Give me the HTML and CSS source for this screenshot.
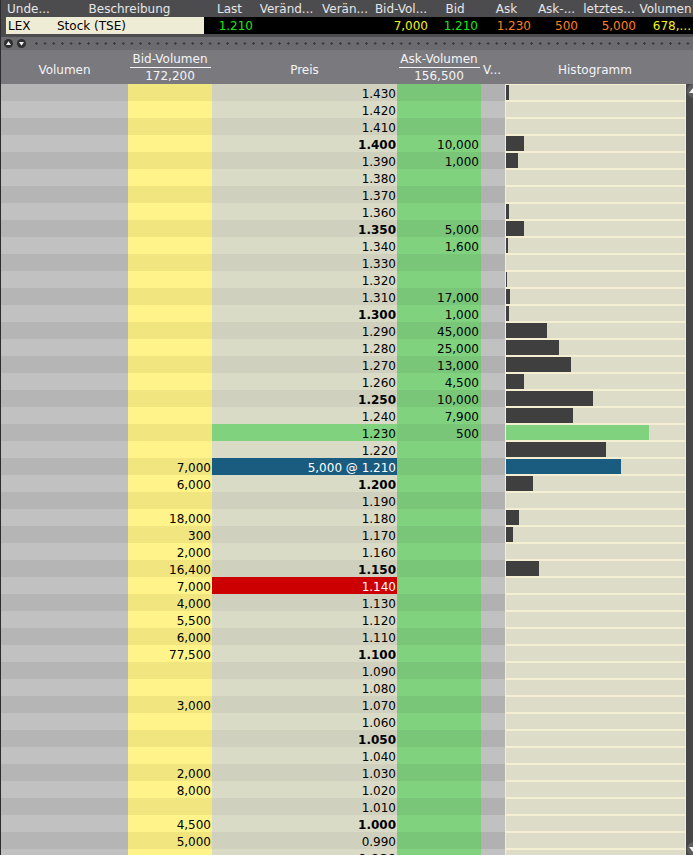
FILE: index.html
```html
<!DOCTYPE html>
<html>
  <head>
    <meta charset="utf-8">
    <title>LEX - BookTrader</title>
    <link rel="stylesheet" href="styles.css">
  </head>
  <body>
    <div class="app">
      <!-- quote line for the selected contract -->
      <div class="quote">
        <span class="qh left">Unde...</span>
        <span class="qh">Beschreibung</span>
        <span class="qh">Last</span>
        <span class="qh">Veränd...</span>
        <span class="qh">Verän...</span>
        <span class="qh">Bid-Vol...</span>
        <span class="qh">Bid</span>
        <span class="qh">Ask</span>
        <span class="qh">Ask-...</span>
        <span class="qh">letztes...</span>
        <span class="qh">Volumen</span>

        <span class="qd desc">LEX</span>
        <span class="qd desc">Stock (TSE)</span>
        <span class="qd green">1.210</span>
        <span class="qd"></span>
        <span class="qd"></span>
        <span class="qd yellow">7,000</span>
        <span class="qd green">1.210</span>
        <span class="qd orange">1.230</span>
        <span class="qd orange">500</span>
        <span class="qd orange">5,000</span>
        <span class="qd yellow">678,...</span>
      </div>

      <div class="toolbar">
        <svg class="knob" width="9" height="9" viewBox="0 0 9 9"><circle cx="4.5" cy="4.5" r="4.5" fill="#2f2f31"/><polygon points="4.5,2.2 7,6 2,6" fill="#f2f2f2"/></svg>
        <svg class="knob" width="9" height="9" viewBox="0 0 9 9"><circle cx="4.5" cy="4.5" r="4.5" fill="#2f2f31"/><polygon points="2,3 7,3 4.5,6.8" fill="#f2f2f2"/></svg>
        <span class="dots"></span>
      </div>

      <div class="head">
        <span class="hc">Volumen</span>
        <span class="hc two"><b>Bid-Volumen</b><em>172,200</em></span>
        <span class="hc">Preis</span>
        <span class="hc two"><b>Ask-Volumen</b><em>156,500</em></span>
        <span class="hc left">V...</span>
        <span class="hc">Histogramm</span>
      </div>

      <div class="ladder">
        <div class="rows">
          <div class="r"><span class="vol"></span><span class="bid"></span><span class="px">1.430</span><span class="ask"></span><span class="v"></span><span class="hist"><i style="width:3px"></i></span></div>
          <div class="r"><span class="vol"></span><span class="bid"></span><span class="px">1.420</span><span class="ask"></span><span class="v"></span><span class="hist"></span></div>
          <div class="r"><span class="vol"></span><span class="bid"></span><span class="px">1.410</span><span class="ask"></span><span class="v"></span><span class="hist"></span></div>
          <div class="r"><span class="vol"></span><span class="bid"></span><span class="px b">1.400</span><span class="ask">10,000</span><span class="v"></span><span class="hist"><i style="width:18px"></i></span></div>
          <div class="r"><span class="vol"></span><span class="bid"></span><span class="px">1.390</span><span class="ask">1,000</span><span class="v"></span><span class="hist"><i style="width:12px"></i></span></div>
          <div class="r"><span class="vol"></span><span class="bid"></span><span class="px">1.380</span><span class="ask"></span><span class="v"></span><span class="hist"></span></div>
          <div class="r"><span class="vol"></span><span class="bid"></span><span class="px">1.370</span><span class="ask"></span><span class="v"></span><span class="hist"></span></div>
          <div class="r"><span class="vol"></span><span class="bid"></span><span class="px">1.360</span><span class="ask"></span><span class="v"></span><span class="hist"><i style="width:3px"></i></span></div>
          <div class="r"><span class="vol"></span><span class="bid"></span><span class="px b">1.350</span><span class="ask">5,000</span><span class="v"></span><span class="hist"><i style="width:18px"></i></span></div>
          <div class="r"><span class="vol"></span><span class="bid"></span><span class="px">1.340</span><span class="ask">1,600</span><span class="v"></span><span class="hist"><i style="width:2px"></i></span></div>
          <div class="r"><span class="vol"></span><span class="bid"></span><span class="px">1.330</span><span class="ask"></span><span class="v"></span><span class="hist"></span></div>
          <div class="r"><span class="vol"></span><span class="bid"></span><span class="px">1.320</span><span class="ask"></span><span class="v"></span><span class="hist"><i style="width:1px"></i></span></div>
          <div class="r"><span class="vol"></span><span class="bid"></span><span class="px">1.310</span><span class="ask">17,000</span><span class="v"></span><span class="hist"><i style="width:4px"></i></span></div>
          <div class="r"><span class="vol"></span><span class="bid"></span><span class="px b">1.300</span><span class="ask">1,000</span><span class="v"></span><span class="hist"><i style="width:3px"></i></span></div>
          <div class="r"><span class="vol"></span><span class="bid"></span><span class="px">1.290</span><span class="ask">45,000</span><span class="v"></span><span class="hist"><i style="width:41px"></i></span></div>
          <div class="r"><span class="vol"></span><span class="bid"></span><span class="px">1.280</span><span class="ask">25,000</span><span class="v"></span><span class="hist"><i style="width:53px"></i></span></div>
          <div class="r"><span class="vol"></span><span class="bid"></span><span class="px">1.270</span><span class="ask">13,000</span><span class="v"></span><span class="hist"><i style="width:65px"></i></span></div>
          <div class="r"><span class="vol"></span><span class="bid"></span><span class="px">1.260</span><span class="ask">4,500</span><span class="v"></span><span class="hist"><i style="width:18px"></i></span></div>
          <div class="r"><span class="vol"></span><span class="bid"></span><span class="px b">1.250</span><span class="ask">10,000</span><span class="v"></span><span class="hist"><i style="width:87px"></i></span></div>
          <div class="r"><span class="vol"></span><span class="bid"></span><span class="px">1.240</span><span class="ask">7,900</span><span class="v"></span><span class="hist"><i style="width:67px"></i></span></div>
          <div class="r"><span class="vol"></span><span class="bid"></span><span class="px ask-hit">1.230</span><span class="ask">500</span><span class="v"></span><span class="hist"><i class="green" style="width:143px"></i></span></div>
          <div class="r"><span class="vol"></span><span class="bid"></span><span class="px">1.220</span><span class="ask"></span><span class="v"></span><span class="hist"><i style="width:100px"></i></span></div>
          <div class="r"><span class="vol"></span><span class="bid">7,000</span><span class="px pos">5,000 @ 1.210</span><span class="ask"></span><span class="v"></span><span class="hist"><i class="blue" style="width:115px"></i></span></div>
          <div class="r"><span class="vol"></span><span class="bid">6,000</span><span class="px b">1.200</span><span class="ask"></span><span class="v"></span><span class="hist"><i style="width:27px"></i></span></div>
          <div class="r"><span class="vol"></span><span class="bid"></span><span class="px">1.190</span><span class="ask"></span><span class="v"></span><span class="hist"></span></div>
          <div class="r"><span class="vol"></span><span class="bid">18,000</span><span class="px">1.180</span><span class="ask"></span><span class="v"></span><span class="hist"><i style="width:13px"></i></span></div>
          <div class="r"><span class="vol"></span><span class="bid">300</span><span class="px">1.170</span><span class="ask"></span><span class="v"></span><span class="hist"><i style="width:7px"></i></span></div>
          <div class="r"><span class="vol"></span><span class="bid">2,000</span><span class="px">1.160</span><span class="ask"></span><span class="v"></span><span class="hist"></span></div>
          <div class="r"><span class="vol"></span><span class="bid">16,400</span><span class="px b">1.150</span><span class="ask"></span><span class="v"></span><span class="hist"><i style="width:33px"></i></span></div>
          <div class="r"><span class="vol"></span><span class="bid">7,000</span><span class="px alert">1.140</span><span class="ask"></span><span class="v"></span><span class="hist"></span></div>
          <div class="r"><span class="vol"></span><span class="bid">4,000</span><span class="px">1.130</span><span class="ask"></span><span class="v"></span><span class="hist"></span></div>
          <div class="r"><span class="vol"></span><span class="bid">5,500</span><span class="px">1.120</span><span class="ask"></span><span class="v"></span><span class="hist"></span></div>
          <div class="r"><span class="vol"></span><span class="bid">6,000</span><span class="px">1.110</span><span class="ask"></span><span class="v"></span><span class="hist"></span></div>
          <div class="r"><span class="vol"></span><span class="bid">77,500</span><span class="px b">1.100</span><span class="ask"></span><span class="v"></span><span class="hist"></span></div>
          <div class="r"><span class="vol"></span><span class="bid"></span><span class="px">1.090</span><span class="ask"></span><span class="v"></span><span class="hist"></span></div>
          <div class="r"><span class="vol"></span><span class="bid"></span><span class="px">1.080</span><span class="ask"></span><span class="v"></span><span class="hist"></span></div>
          <div class="r"><span class="vol"></span><span class="bid">3,000</span><span class="px">1.070</span><span class="ask"></span><span class="v"></span><span class="hist"></span></div>
          <div class="r"><span class="vol"></span><span class="bid"></span><span class="px">1.060</span><span class="ask"></span><span class="v"></span><span class="hist"></span></div>
          <div class="r"><span class="vol"></span><span class="bid"></span><span class="px b">1.050</span><span class="ask"></span><span class="v"></span><span class="hist"></span></div>
          <div class="r"><span class="vol"></span><span class="bid"></span><span class="px">1.040</span><span class="ask"></span><span class="v"></span><span class="hist"></span></div>
          <div class="r"><span class="vol"></span><span class="bid">2,000</span><span class="px">1.030</span><span class="ask"></span><span class="v"></span><span class="hist"></span></div>
          <div class="r"><span class="vol"></span><span class="bid">8,000</span><span class="px">1.020</span><span class="ask"></span><span class="v"></span><span class="hist"></span></div>
          <div class="r"><span class="vol"></span><span class="bid"></span><span class="px">1.010</span><span class="ask"></span><span class="v"></span><span class="hist"></span></div>
          <div class="r"><span class="vol"></span><span class="bid">4,500</span><span class="px b">1.000</span><span class="ask"></span><span class="v"></span><span class="hist"></span></div>
          <div class="r"><span class="vol"></span><span class="bid">5,000</span><span class="px">0.990</span><span class="ask"></span><span class="v"></span><span class="hist"></span></div>
          <div class="r"><span class="vol"></span><span class="bid"></span><span class="px b">0.980</span><span class="ask"></span><span class="v"></span><span class="hist"></span></div>
        </div>
        <div class="scroll">
          <span class="arrow top"></span>
          <span class="arrow bottom"></span>
        </div>
      </div>
    </div>
  </body>
</html>
```

FILE: styles.css
```css
html, body
{
  margin: 0;
  height: 855px;
  overflow: hidden;
  background: #4c4c4e;
}

.app
{
  font-family: "DejaVu Sans", Verdana, sans-serif;
  font-size: 12px;
  border-left: 1px solid #2c2c2e;
  height: 855px;
  overflow: hidden;
}

/* quote line */
.quote
{
  display: grid;
  grid-template-columns: 49px 149px 51px 63px 54px 58px 50px 53px 47px 58px 55px;
  grid-template-rows: 17px 17px;
  padding-left: 5px;
  background: #4c4c4e;
  line-height: 17px;
}

.qh
{
  color: #e6e6e8;
  text-align: center;
  white-space: nowrap;
  overflow: hidden;
  padding-top: 2px;
  line-height: 15px;
}

.qh.left
{
  text-align: left;
  padding-left: 1px;
}

.qd
{
  background: #000;
  text-align: right;
  padding-right: 2px;
  white-space: nowrap;
  overflow: hidden;
  padding-top: 1px;
  line-height: 16px;
}

.qd.desc
{
  background: #efecd6;
  color: #000;
  text-align: left;
  padding-left: 2px;
}

.green { color: #19e619; }
.yellow { color: #f2f21a; }
.orange { color: #ff7f1e; }

/* splitter */
.toolbar
{
  display: flex;
  align-items: center;
  gap: 4px;
  height: 13px;
  border-top: 3px solid #4c4c4e;
  background: #6c6c70;
  padding-left: 3px;
}

.dots
{
  flex: 1;
  height: 3px;
  margin-left: 2px;
  background-image: radial-gradient(circle, #3a3a3c 1px, transparent 1.3px);
  background-size: 8.7px 3px;
}

/* column titles */
.head
{
  display: grid;
  grid-template-columns: 127px 84px 185px 84px 24px 180px 8px;
  height: 34px;
  background: #7a7a7e;
  color: #f4f4f8;
  line-height: 17px;
}

.hc
{
  text-align: center;
  padding-top: 12px;
  white-space: nowrap;
}

.hc.left
{
  text-align: left;
  padding-left: 2px;
}

.hc.two
{
  padding-top: 2px;
  display: flex;
  flex-direction: column;
  align-items: center;
}

.hc.two b
{
  font-weight: normal;
  width: 81px;
  line-height: 15px;
  border-bottom: 1px solid #f4f4f8;
}

.hc.two em
{
  font-style: normal;
  line-height: 16px;
}

/* price ladder */
.ladder
{
  display: flex;
}

.rows
{
  width: 684px;
}

.r
{
  display: grid;
  grid-template-columns: 127px 84px 185px 84px 24px 180px;
  height: 17px;
  color: #000;
}

.r span
{
  text-align: right;
  padding-right: 1px;
  padding-top: 3px;
  line-height: 14px;
  white-space: nowrap;
}

.vol { background: #c1c1c1; }
.bid { background: #fff389; }
.px { background: #dadbc7; }
.r .ask { background: #80d27f; padding-right: 2px; }
.v { background: #c1c1c1; }

.r:nth-child(odd) .vol { background: #b5b5b5; }
.r:nth-child(odd) .bid { background: #f1e57f; }
.r:nth-child(odd) .px { background: #d0d0bf; }
.r:nth-child(odd) .ask { background: #79c679; }
.r:nth-child(odd) .v { background: #b1b1b1; }

.r .px.b { font-weight: bold; }
.r .px.ask-hit { background: #80d27f; }
.r .px.pos { background: #1a5b80; color: #fff; }
.r .px.alert { background: #cc0000; color: #fff; }

.r .hist
{
  box-sizing: border-box;
  background: #dcdcc8;
  border: 1px solid #f4eed2;
  border-right: 0;
  padding: 0;
}

.hist i
{
  display: block;
  height: 15px;
  background: #3f3f3f;
}

.hist i.green { background: #80d27f; }
.hist i.blue { background: #1a5b80; }

.scroll
{
  position: relative;
  width: 8px;
  height: 771px;
  background: #474749;
  border-left: 1px solid #f4eed2;
  overflow: hidden;
}

/* round arrow buttons, cut off by the window edge */
.arrow
{
  position: absolute;
  left: 1px;
  width: 14px;
  height: 14px;
  border-radius: 50%;
  background: #5e5e60;
}

.arrow.top { top: 0; }
.arrow.bottom { top: 758px; }

.arrow::after
{
  content: "";
  position: absolute;
  left: 2px;
  border-left: 4px solid transparent;
  border-right: 4px solid transparent;
}

.arrow.top::after
{
  top: 4px;
  border-bottom: 5px solid #f2f2f2;
}

.arrow.bottom::after
{
  top: 5px;
  border-top: 5px solid #f2f2f2;
}
```
